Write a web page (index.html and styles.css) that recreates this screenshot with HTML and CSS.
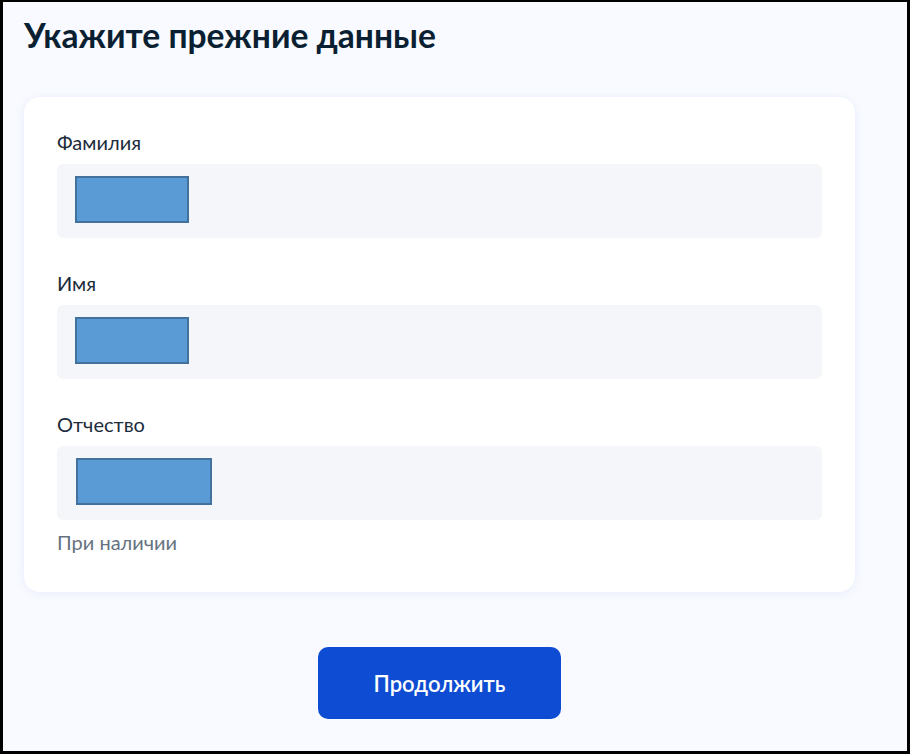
FILE: index.html
```html
<!DOCTYPE html>
<html lang="ru">
  <head>
    <meta charset="UTF-8" />
    <meta name="viewport" content="width=device-width, initial-scale=1.0" />
    <title>Укажите прежние данные</title>
    <link rel="stylesheet" href="styles.css">
  </head>
  <body>
    <div class="page">
      <h1>Укажите прежние данные</h1>

      <div class="card">
        <div class="field">
          <label>Фамилия</label>
          <div class="input"><span class="mask"></span></div>
        </div>
        <div class="field">
          <label>Имя</label>
          <div class="input"><span class="mask"></span></div>
        </div>
        <div class="field">
          <label>Отчество</label>
          <div class="input"><span class="mask wide"></span></div>
          <div class="hint">При наличии</div>
        </div>
      </div>

      <div class="actions">
        <button class="btn">Продолжить</button>
      </div>
    </div>
  </body>
</html>
```

FILE: styles.css
```css
* {
  box-sizing: border-box;
}

body {
  margin: 0;
  font-family: Lato, "Noto Sans", sans-serif;
  color: #0b1f33;
}

/* ========== Page ========== */
.page {
  height: 754px;
  border: 3px solid #000;
  border-top-width: 2px;
  background: #f8faff;
  padding: 13px 52px 0 21px;
}

h1 {
  margin: 0 0 42px;
  font-size: 33.6px;
  line-height: 40px;
  font-weight: 700;
  color: #0b1f33;
}

/* ========== Card ========== */
.card {
  background: #fff;
  border-radius: 16px;
  box-shadow: 0 1px 8px rgba(160, 180, 220, 0.18);
  padding: 33px 33px 38px;
}

.field + .field {
  margin-top: 33px;
}

.field label {
  display: block;
  font-size: 20px;
  line-height: 24px;
  margin-bottom: 10px;
  color: #1c2b3b;
}

.input {
  height: 74px;
  background: #f5f6f9;
  border-radius: 6px;
  padding: 12px 18px;
}

.mask {
  display: block;
  width: 114px;
  height: 47px;
  background: #5b9bd5;
  border: 2px solid #41719c;
}

.mask.wide {
  width: 136px;
  margin-left: 1px;
}

.hint {
  margin-top: 10px;
  font-size: 20px;
  line-height: 24px;
  color: #66727f;
}

/* ========== Button ========== */
.actions {
  display: flex;
  justify-content: center;
  padding-top: 55px;
}

.btn {
  width: 243px;
  height: 72px;
  border: none;
  border-radius: 10px;
  background: #0d4cd3;
  color: #fff;
  font-family: Lato, "Noto Sans", sans-serif;
  font-size: 22px;
  font-weight: 600;
  cursor: pointer;
}
```
